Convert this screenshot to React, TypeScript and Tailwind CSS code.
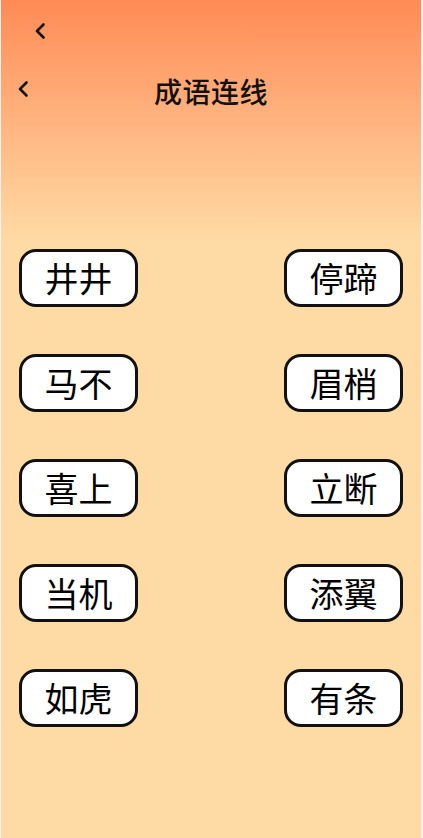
import React from 'react';

const pairs: [string, string][] = [
  ['井井', '停蹄'],
  ['马不', '眉梢'],
  ['喜上', '立断'],
  ['当机', '添翼'],
  ['如虎', '有条'],
];

function Back({ className }: { className: string }) {
  return (
    <svg className={className} width="12" height="18" viewBox="0 0 12 18" fill="none">
      <path d="M9.5 2.5L3 9l6.5 6.5" stroke="#111" strokeWidth="2.6" strokeLinecap="round" strokeLinejoin="round" />
    </svg>
  );
}

function Word({ text }: { text: string }) {
  return (
    <div className="w-[119px] h-[58px] rounded-[17px] border-[3px] border-[#111] bg-white flex items-center justify-center text-[34px] leading-none text-black">
      {text}
    </div>
  );
}

export default function App() {
  return (
    <div
      className="w-[423px] h-[838px] bg-[#f2f2f2] pl-[1px] pr-[2px]"
      style={{ fontFamily: '"Noto Sans CJK SC", "Noto Sans", sans-serif' }}
    >
      <div className="h-full bg-[#fedaa4] flex flex-col">
        <div className="h-[240px] bg-gradient-to-b from-[#ff8a55] via-[#ffb37f] to-[#fedaa4] flex flex-col">
          <div className="h-[58px] pl-[33px] pt-[22px]">
            <Back className="" />
          </div>
          <div className="relative h-[66px] flex items-center justify-center">
            <Back className="absolute left-[16px] top-[22px]" />
            <span className="text-[28px] font-medium text-[#111] tracking-[0.5px]">成语连线</span>
          </div>
        </div>
        <div className="flex flex-col gap-[47px] pl-[18px] pr-[18px] pt-[9px]">
          {pairs.map(([a, b]) => (
            <div key={a} className="flex justify-between">
              <Word text={a} />
              <Word text={b} />
            </div>
          ))}
        </div>
      </div>
    </div>
  );
}
